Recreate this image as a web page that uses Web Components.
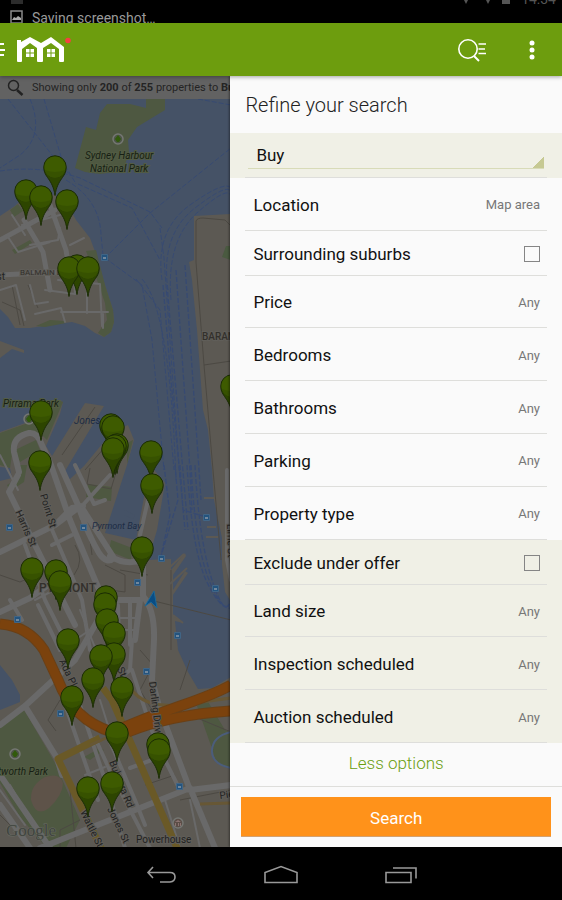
<!DOCTYPE html>
<html lang="en">
<head>
<meta charset="utf-8">
<meta name="viewport" content="width=device-width, initial-scale=1">
<title>Refine your search</title>
<style>
  body { margin: 0; background: #000; font-family: Roboto, "Liberation Sans", sans-serif; }
</style>
</head>
<body>
<search-screen></search-screen>
<script>
function define(name, html, setup) {
  const template = document.createElement('template');
  template.innerHTML = html;
  customElements.define(name, class extends HTMLElement {
    constructor() {
      super();
      this.attachShadow({ mode: 'open' }).append(template.content.cloneNode(true));
    }
    connectedCallback() { if (setup) setup(this, this.shadowRoot); }
  });
}

define('status-bar', `
<style>
  :host { display: flex; flex-direction: column; justify-content: flex-end; height: 23px; overflow: hidden; background: #000; color: #9a9a9a; }
  .old { display: flex; justify-content: flex-end; gap: 10px; padding: 0 6px 0 11px; font-size: 14px; line-height: 16px; color: #555; flex: none; }
  .old i { width: 12px; height: 14px; background: #2c2c2c; }
  .old i:first-child { margin-right: auto; }
  .note { display: flex; gap: 9px; padding: 2px 0 0 10px; font-size: 14px; line-height: 18px; height: 14px; align-items: flex-start; flex: none; }
  .old svg, .old i { margin-top: -1px; }
  svg { flex: none; margin-top: 1px; }
</style>
<div class="old"><i></i><svg width="50" height="14" viewBox="0 0 50 14" fill="#555"><path d="M0 4L5 14L10 4zM22 4L27 14L32 4zM41 2h8v12h-8z"/></svg><span>14:34</span></div>
<div class="note"><svg width="13" height="14" viewBox="0 0 13 14"><path d="M1 1h11v12H1z" fill="none" stroke="#8a8a8a" stroke-width="1.5"/><path d="M2 10l2-3 2 1 2-2 3 2v2z" fill="#aaa"/></svg><span>Saving screenshot…</span></div>
`);

define('app-bar', `
<style>
  :host { display: flex; align-items: center; height: 53px; background: #6d9d0e; position: relative; z-index: 2; box-shadow: 0 1px 4px rgba(0,0,0,.35); }
  button { border: 0; padding: 0; background: none; display: grid; place-items: center; height: 53px; }
  .menu { width: 5px; justify-items: start; margin-right: 11px; }
  a { display: block; margin-right: auto; }
  svg { display: block; }
  .find { width: 48px; margin-right: 12px; }
  .more { width: 48px; margin-right: 6px; }
</style>
<button class="menu" aria-label="Open menu"><svg width="5" height="16" viewBox="0 0 5 16"><path d="M0 2h4M0 8h5M0 13h4" stroke="#fff" stroke-width="2"/></svg></button>
<a href="#" aria-label="Home"><svg width="56" height="28" viewBox="0 0 56 28">
  <path d="M1 4h4v2L14 1l11 6L35 1l13 10v14q0 1-1 1h-3q-1 0-1-1V13l-8-6-8 5v13q0 1-1 1h-4q-1 0-1-1V12l-7-5-8 6v12q0 1-1 1H2q-1 0-1-1z" fill="#fff"/>
  <path d="M10 13h3.500v3.500H10zM14.500 13H18v3.500h-3.500zM10 17.500h3.500V21H10zM14.500 17.500H18V21h-3.500zM31 13h3.500v3.500H31zM35.500 13H39v3.500h-3.500zM31 17.500h3.500V21H31zM35.500 17.500H39V21h-3.500z" fill="#fff"/>
  <circle cx="52" cy="4.500" r="2.800" fill="#f54040"/></svg></a>
<button class="find" aria-label="Refine search"><svg width="30" height="26" viewBox="0 0 30 26" fill="none" stroke="#fff"><circle cx="11" cy="12" r="9.200" stroke-width="1.600"/><path d="M17 19l5 5" stroke-width="2"/><path d="M21.500 7H29M21.500 12H28M21.500 16.500H29" stroke-width="1.600"/></svg></button>
<button class="more" aria-label="More options"><svg width="6" height="20" viewBox="0 0 6 20" fill="#fff"><circle cx="3" cy="3" r="2.500"/><circle cx="3" cy="10" r="2.500"/><circle cx="3" cy="17" r="2.500"/></svg></button>
`);

define('result-notice', `
<style>
  :host { display: flex; align-items: center; gap: 8px; height: 23px; padding-left: 7px; overflow: hidden; white-space: nowrap; font-size: 11px; background: #626262; color: #242424; }
  svg { flex: none; }
</style>
<svg width="17" height="18" viewBox="0 0 17 18" fill="none" stroke="#222"><circle cx="6.500" cy="6.500" r="5" stroke-width="1.500"/><path d="M10 11l5.500 5" stroke-width="2.500"/></svg>
<span><slot></slot></span>
`);

define('map-pin', `
<style>
  :host { position: absolute; display: block; width: 24px; height: 42px; margin: -12px 0 0 -12px; }
  svg { display: block; }
</style>
<svg width="24" height="42" viewBox="0 0 24 42">
  <path d="M12 .8A11.200 11.200 0 0 0 .8 12C.8 23 9.500 23 12 40.500C14.500 23 23.200 23 23.200 12A11.200 11.200 0 0 0 12 .8z" fill="#2d4500" stroke="#1b2c05"/>
  <circle cx="12" cy="12" r="10.600" fill="#3e5b00"/><path d="M1.800 15Q12 19 22.200 15Q20 22 12 22.600Q4 22 1.800 15z" fill="#375200"/>
</svg>
`);

const PINS = [[55,167],[26,191],[41,197],[67,201],[77,266],[69,268],[88,268],[232,386],[41,412],[111,425],[113,427],[117,445],[115,446],[113,449],[151,452],[40,462],[152,485],[142,548],[32,569],[56,571],[60,582],[106,597],[105,604],[107,620],[114,633],[68,640],[114,654],[101,656],[93,679],[122,688],[72,697],[117,733],[158,744],[159,750],[112,783],[88,788]];

define('suburb-map', `
<style>
  :host { display: block; position: relative; overflow: hidden; background: #455266; }
  .ground { display: block; position: absolute; inset: 0; width: 100%; height: 100%; }
  text { font-family: Roboto, sans-serif; font-size: 10px; fill: #222; stroke: #605e59; stroke-width: 2px; paint-order: stroke; }
  .park { font-style: italic; fill: #171f14; stroke: #525c43; }
  .bay { font-style: italic; fill: #1d2c45; stroke: none; }
  .area { fill: #33302c; font-weight: 500; }
</style>
<svg class="ground" aria-label="Map of Pyrmont"><g transform="translate(0 -99)" fill="none">
  <g fill="#5c5953">
    <path d="M0 216L15 206 32 190 55 195 68 205 76 220 90 238 97 257 105 285 113 310 114 322 111 332 104 337 95 333 85 326 72 322 50 325 30 328 15 328 8 317 0 309z"/>
    <path d="M0 341L24 350V353L12 349 0 358z"/>
    <path d="M194 216L231 214 900 214V900H231V602L225 592 222 565 222 538 214 500 212 470 208 430 203 410 197 330 192 280 189 262 194 260z"/>
    <path d="M0 432L28 422 45 404 58 400 63 402 60 414 46 446 52 456 85 403 104 406 62 476 70 479 84 466 112 432 128 425 134 440 127 465 105 533 136 540 150 465 165 483 157 530 148 560 171 559V570L185 553 186 556 173 575V590L185 571 188 573 173 595V615L183 623 175 621 178 650 188 672 198 689 212 688 231 677H900V900H0z"/>
  </g>
  <path fill="#455266" d="M0 467L10 468 12 478 0 481zM0 665L12 680 20 695 20 702 0 710zM124 510L135 515 133 519 124 515z"/>
  <g fill="#4e5841">
    <path d="M75 168L86 127 96 130 100 113 107 104 130 104 146 108V99H165V110L137 127 128 140 129 152 125 165 115 172 100 174 85 172z"/>
    <path d="M86 251L96 250 105 285 113 310 114 322 111 332 104 337 98 333 107 320 105 303 97 280zM36 326L50 320 64 321 66 323 45 327zM10 210L18 204 23 211 14 217zM12 250L30 240 32 243 15 254z"/>
    <path d="M0 433L28 423 40 412 58 400 63 402 47 440 40 433 22 432 14 440 10 468 0 465zM15 450L36 440 40 450 20 462zM16 465H27L24 482 10 491 7 485 20 478zM88 484L112 487 111 501 86 497zM111 540L132 548 131 560 109 551zM127 443L133 440 127 464z"/>
    <path d="M0 725L23 708 55 763 80 820 66 848H47L20 817 0 783zM84 757L100 748 104 750 90 760zM197 706L207 700 225 730 231 733V765L216 760z"/>
    <circle cx="231" cy="750" r="18"/>
  </g>
  <path d="M31 800Q30 785 45 777Q60 772 63 783Q63 795 49 808Q36 818 31 800z" fill="#5e5349"/>
  <g stroke="#4c4943" stroke-width="1">
    <path d="M196 221Q197 218 203 218L225 220 231 226M196 221V262L204 365 213 470 221 560M204 365L231 361M2 302L20 310 24 326M12 285L20 325M28 285L38 308M62 455L95 407M85 470L118 432M90 468L87 484 111 489 118 466M80 520Q90 530 92 555M0 575L20 582 40 573M75 545Q85 560 74 575M120 570L148 575M110 590L125 592V575L105 565M150 600L231 620M171 570V650M140 650L153 665 140 690 155 715M60 700L48 720 56 731M0 815L45 860M80 820L60 830V848M70 790L76 848M190 715L231 732M145 785L175 775M180 800L231 790M190 660L180 690"/>
  </g>
  <g stroke="#696969" stroke-linejoin="round" stroke-linecap="round">
    <path stroke-width="5" d="M24 220L43 252 50 290M0 240L55 210M50 205L66 250 70 275M0 275L60 272"/>
    <path stroke-width="2" d="M12 215L25 235M22 225L60 215M30 245L58 240 60 228M70 245L84 238M8 237L18 252 50 242M0 290L16 285 25 320M30 285L35 304 48 302M45 290L75 294 74 280M58 280L100 284 102 326M35 314L61 308 65 322M61 312L108 312M87 290V313M103 314V328"/>
    <path stroke-width="6" d="M19 472L14 452Q12 437 29 433Q37 432 41 443L51 465 70 520 95 580 110 615M18 475L9 492 30 535 50 575 75 625M0 552L55 525 72 508 83 506M60 465L78 505Q88 535 99 553Q107 565 114 558L82 508M110 556Q125 566 143 560V596Q155 610 154 640L152 680 160 710 190 790 231 785M55 525L75 510M0 612L30 598 55 580M105 600L140 600 135 640M0 725L25 706 75 660 98 620M25 706L57 758 62 775M0 775L50 848M0 805L30 848M40 848L190 788 215 848"/>
    <path stroke-width="4" d="M50 525L65 560 82 600 90 650M25 545L45 600 70 650M38 605L60 650M10 600L22 620M72 535L52 545M75 465L94 504 105 500M82 506L110 475M148 500L140 535M132 640L130 670 118 680M130 600V645M118 605L120 670M75 690L105 780 125 848M60 690L98 800M132 670L155 740 180 790M105 730L135 800 145 825M130 768L160 757M95 738L112 775 150 848M227 470V560L231 580"/>
    <path stroke-width="2" d="M0 455L18 490M35 600L58 588M80 610L100 660M75 640L90 630M120 618H136M121 630H135M100 700L125 780M85 775L105 767M0 790L25 825M10 785L36 830M190 800L200 848M165 800L180 848"/>
  </g>
  <g stroke-linejoin="round">
    <path stroke="#6a5927" stroke-width="7" d="M103 688L112 700 178 850M100 738L58 759 102 850"/>
    <path stroke="#675735" stroke-width="3" d="M132 690Q145 708 180 705L231 698M90 745L106 738M200 804L231 803"/>
    <path stroke="#694017" stroke-width="11" d="M0 624Q28 626 44 650L58 680Q73 720 112 732Q145 718 180 706T231 685M128 732Q170 715 231 711"/>
    <path stroke="#7b420d" stroke-width="9" d="M0 624Q28 626 44 650L58 680Q73 720 112 732Q145 718 180 706T231 685M128 732Q170 715 231 711"/>
  </g>
  <g stroke="#374a72" stroke-dasharray="5 2">
    <path d="M8 99L56 160 70 175M30 99Q45 135 20 155L0 168M44 99L62 160 76 184M0 171Q40 165 80 178L150 212 162 228M66 180Q100 200 101 235L103 255M78 184L132 208 160 260M105 258L150 213 231 148M105 258L142 285 152 340 164 470M160 228L164 258 180 480M162 280Q155 230 190 205T231 188M168 290Q160 235 195 208T231 193M171 300Q166 240 198 212T231 197M136 279L160 310 174 470M142 279Q170 310 176 480M198 99L231 105"/>
    <path d="M163 285L171 380 185 530M167 285L176 390 188 530M176 270L190 470 192 510M185 265L199 470 201 500M164 465L170 515 161 556M175 465L178 500 161 556M180 465L183 510 206 517M187 465Q192 550 206 580T231 608M191 465Q195 545 209 580T231 604M195 465Q199 540 212 580T231 600" stroke-width="1.300"/>
  </g>
  <path stroke="#5c5953" stroke-width="2" d="M170 584L187 568M169 568L184 554M173 615L183 623M204 498H214M207 527H216M206 537H218"/>
  <path d="M231 732Q213 736 212 750T231 768" stroke="#4b5d7b" stroke-width="2"/>
  <g fill="#24547e" stroke="#416585">
    <path d="M101.500 254.500h6v6h-6zM6.500 524.500h6v6h-6zM80.500 524.500h6v6h-6zM158.500 555.500h6v6h-6zM203.500 514.500h6v6h-6zM212.500 585.500h6v6h-6zM134.500 579.500h6v6h-6zM174.500 632.500h6v6h-6zM14.500 616.500h6v6h-6zM143.500 668.500h6v6h-6zM57.500 710.500h6v6h-6zM176.500 783.500h6v6h-6z"/>
  </g>
  <path fill="#71879c" d="M103 257h3v2h-3zM8 527h3v2H8zM82 527h3v2h-3zM160 558h3v2h-3zM205 517h3v2h-3zM214 588h3v2h-3zM136 582h3v2h-3zM176 635h3v2h-3zM16 619h3v2h-3zM145 671h3v2h-3zM59 713h3v2h-3zM178 786h3v2h-3z"/>
  <g fill="#4d5547" stroke="#757773" stroke-width="1.500"><circle cx="118" cy="139" r="5"/><circle cx="29" cy="419" r="5"/><circle cx="15" cy="754" r="5"/><circle cx="178" cy="823" r="5" fill="#5b4e47"/></g>
  <path fill="#315a0b" d="M118 135l3 4-2 3h-2l-2-3zM29 415l3 4-2 3h-2l-2-3zM15 750l3 4-2 3h-2l-2-3z"/>
  <path fill="#4a5a40" d="M226 246h5v14l-9-3z"/>
  <path fill="#8b7370" d="M175 822l3-2 3 2zM175 823h1v3h-1zM178 823h1v3h-1zM180 823h1v3h-1z"/>
  <path d="M154 591L157 608 151 602 145 606z" fill="#084d85" stroke="#1c6898"/>
  <text class="park" x="85" y="159">Sydney Harbour</text>
  <text class="park" x="90" y="172">National Park</text>
  <text class="area" x="20" y="275" style="font-size:8px;font-weight:400">BALMAIN EAST</text>
  <text x="5" y="280" text-anchor="end">West</text>
  <text class="area" x="202" y="340" style="font-size:10px">BARANGAROO</text>
  <text class="park" x="3" y="407">Pirrama Park</text>
  <text class="bay" x="74" y="424">Jones Bay</text>
  <text class="bay" x="92" y="529" style="font-size:9px">Pyrmont Bay</text>
  <text class="area" x="39" y="592" style="font-size:12px">PYRMONT</text>
  <text transform="translate(40 495) rotate(73)">Point St</text>
  <text transform="translate(15 512) rotate(66)">Harris St</text>
  <text transform="translate(59 661) rotate(65)">Ada Pl</text>
  <text transform="translate(149 682) rotate(83)">Darling Drive</text>
  <text transform="translate(227 524) rotate(88)">Lime St</text>
  <text transform="translate(109 762) rotate(68)">Bulwara Rd</text>
  <text transform="translate(107 809) rotate(64)">Jones St</text>
  <text transform="translate(80 812) rotate(64)">Wattle St</text>
  <text transform="translate(117 669) rotate(65)">St</text>
  <text transform="translate(220 799) rotate(-8)">Pier St</text>
  <text class="park" x="48" y="775" text-anchor="end">Wentworth Park</text>
  <text x="136" y="843">Powerhouse</text>
  <text x="6" y="836" style="font-family:'Liberation Serif',serif;font-size:17px;fill:#414540;stroke:#676a62;stroke-width:1px">Google</text>
</g></svg>
<div class="pins"></div>
`, (host, root) => {
  const layer = root.querySelector('.pins');
  layer.replaceChildren(...PINS.map(([x, y]) => {
    const pin = document.createElement('map-pin');
    pin.style.left = x + 'px';
    pin.style.top = (y - 99) + 'px';
    return pin;
  }));
});

const ROW = `
  :host { display: flex; flex: 53 1 0; min-height: 0; padding: 0 15px; background: var(--tone, #fafafa); }
  .row { flex: 1; display: flex; align-items: center; justify-content: space-between; box-sizing: border-box; margin: 0; padding: 2px 7px 0 8px; border: 0; border-bottom: 1px solid #dededb; background: none; font: inherit; font-size: 17px; color: #111; text-align: left; }
`;

define('filter-row', `
<style>${ROW}
  .value { font-size: 13px; color: #777; }
</style>
<button class="row"><span class="name"></span><span class="value"><slot></slot></span></button>
`, (host, root) => { root.querySelector('.name').textContent = host.getAttribute('label'); });

define('filter-check', `
<style>${ROW}
  :host { flex-grow: 45; }
  input { appearance: none; width: 16px; height: 16px; margin: 0; border: 1px solid #858585; background: transparent; }
  input:checked { background: #6d9d0e; }
</style>
<label class="row"><span><slot></slot></span><input type="checkbox"></label>
`);

define('filter-select', `
<style>
  :host { display: flex; flex: 45 1 0; padding: 0 15px; background: #f0f0e6; }
  .box { flex: 1; display: flex; padding: 8px 3px; border-bottom: 1px solid #dededb; }
  select { flex: 1; appearance: none; margin: 0; padding: 2px 8px 0; border: 0; border-bottom: 1px solid #d8dbb8; border-radius: 0; font: inherit; font-size: 17px; color: #111;
    background: linear-gradient(135deg, transparent 50%, #c6c993 50%) right bottom / 11px 11px no-repeat; }
</style>
<div class="box"><select aria-label="Listing type"><option>Buy</option><option>Rent</option><option>Sold</option></select></div>
`);

define('refine-panel', `
<style>
  :host { display: flex; flex-direction: column; background: #fafafa; min-width: 0; box-shadow: -1px 0 2px rgba(0,0,0,.4); position: relative; z-index: 1; }
  h1 { margin: 0; padding: 2px 15px 0; font-size: 20px; font-weight: 300; line-height: 55px; color: #222; }
  .filters { flex: 1; display: flex; flex-direction: column; }
  .extra { --tone: #f0f0e6; }
  button { font: inherit; border: 0; padding: 0; }
  .less { height: 44px; padding-bottom: 4px; background: none; border-bottom: 1px solid #dededb; color: #6a9e10; font-size: 17px; font-weight: 300; }
  footer { display: flex; padding: 10px 11px; }
  .go { flex: 1; height: 40px; padding-top: 2px; background: #ff921a; color: #fff; font-size: 17px; border-bottom: 1px solid #d3a272; }
</style>
<h1>Refine your search</h1>
<div class="filters">
  <filter-select></filter-select>
  <filter-row label="Location">Map area</filter-row>
  <filter-check>Surrounding suburbs</filter-check>
  <filter-row label="Price">Any</filter-row>
  <filter-row label="Bedrooms">Any</filter-row>
  <filter-row label="Bathrooms">Any</filter-row>
  <filter-row label="Parking">Any</filter-row>
  <filter-row label="Property type">Any</filter-row>
  <filter-check class="extra">Exclude under offer</filter-check>
  <filter-row class="extra" label="Land size">Any</filter-row>
  <filter-row class="extra" label="Inspection scheduled">Any</filter-row>
  <filter-row class="extra" label="Auction scheduled">Any</filter-row>
</div>
<button class="less">Less options</button>
<footer><button class="go">Search</button></footer>
`);

define('system-nav', `
<style>
  :host { display: flex; justify-content: center; gap: 72px; height: 53px; background: #000; }
  button { width: 48px; border: 0; padding: 0; background: none; display: grid; place-items: center; }
  svg { display: block; }
</style>
<button aria-label="Back"><svg width="32" height="20" viewBox="0 0 32 20" fill="none" stroke="#999" stroke-width="1.600"><path d="M8 3L3 8.500l5 5.500M3 8.500h22q5 0 5 4.500T25 18H15"/></svg></button>
<button aria-label="Home"><svg width="36" height="20" viewBox="0 0 36 20" fill="none" stroke="#999" stroke-width="1.600"><path d="M2 18.500V8.500L18 2.500l16 6v10z"/></svg></button>
<button aria-label="Recent apps"><svg width="32" height="20" viewBox="0 0 32 20" fill="none" stroke="#999" stroke-width="1.600"><path d="M1 8.500h25v10H1zM8 4h23v10.500"/></svg></button>
`);

define('search-screen', `
<style>
  :host { display: flex; flex-direction: column; min-height: 100vh; }
  main { flex: 1; display: grid; grid-template-columns: 41fr 59fr; }
  .results { display: flex; flex-direction: column; min-width: 0; overflow: hidden; }
  suburb-map { flex: 1; }
</style>
<status-bar></status-bar>
<app-bar></app-bar>
<main>
  <section class="results">
    <result-notice>Showing only <b>200</b> of <b>255</b> properties to <b>Buy</b></result-notice>
    <suburb-map></suburb-map>
  </section>
  <refine-panel></refine-panel>
</main>
<system-nav></system-nav>
`);
</script>
</body>
</html>
